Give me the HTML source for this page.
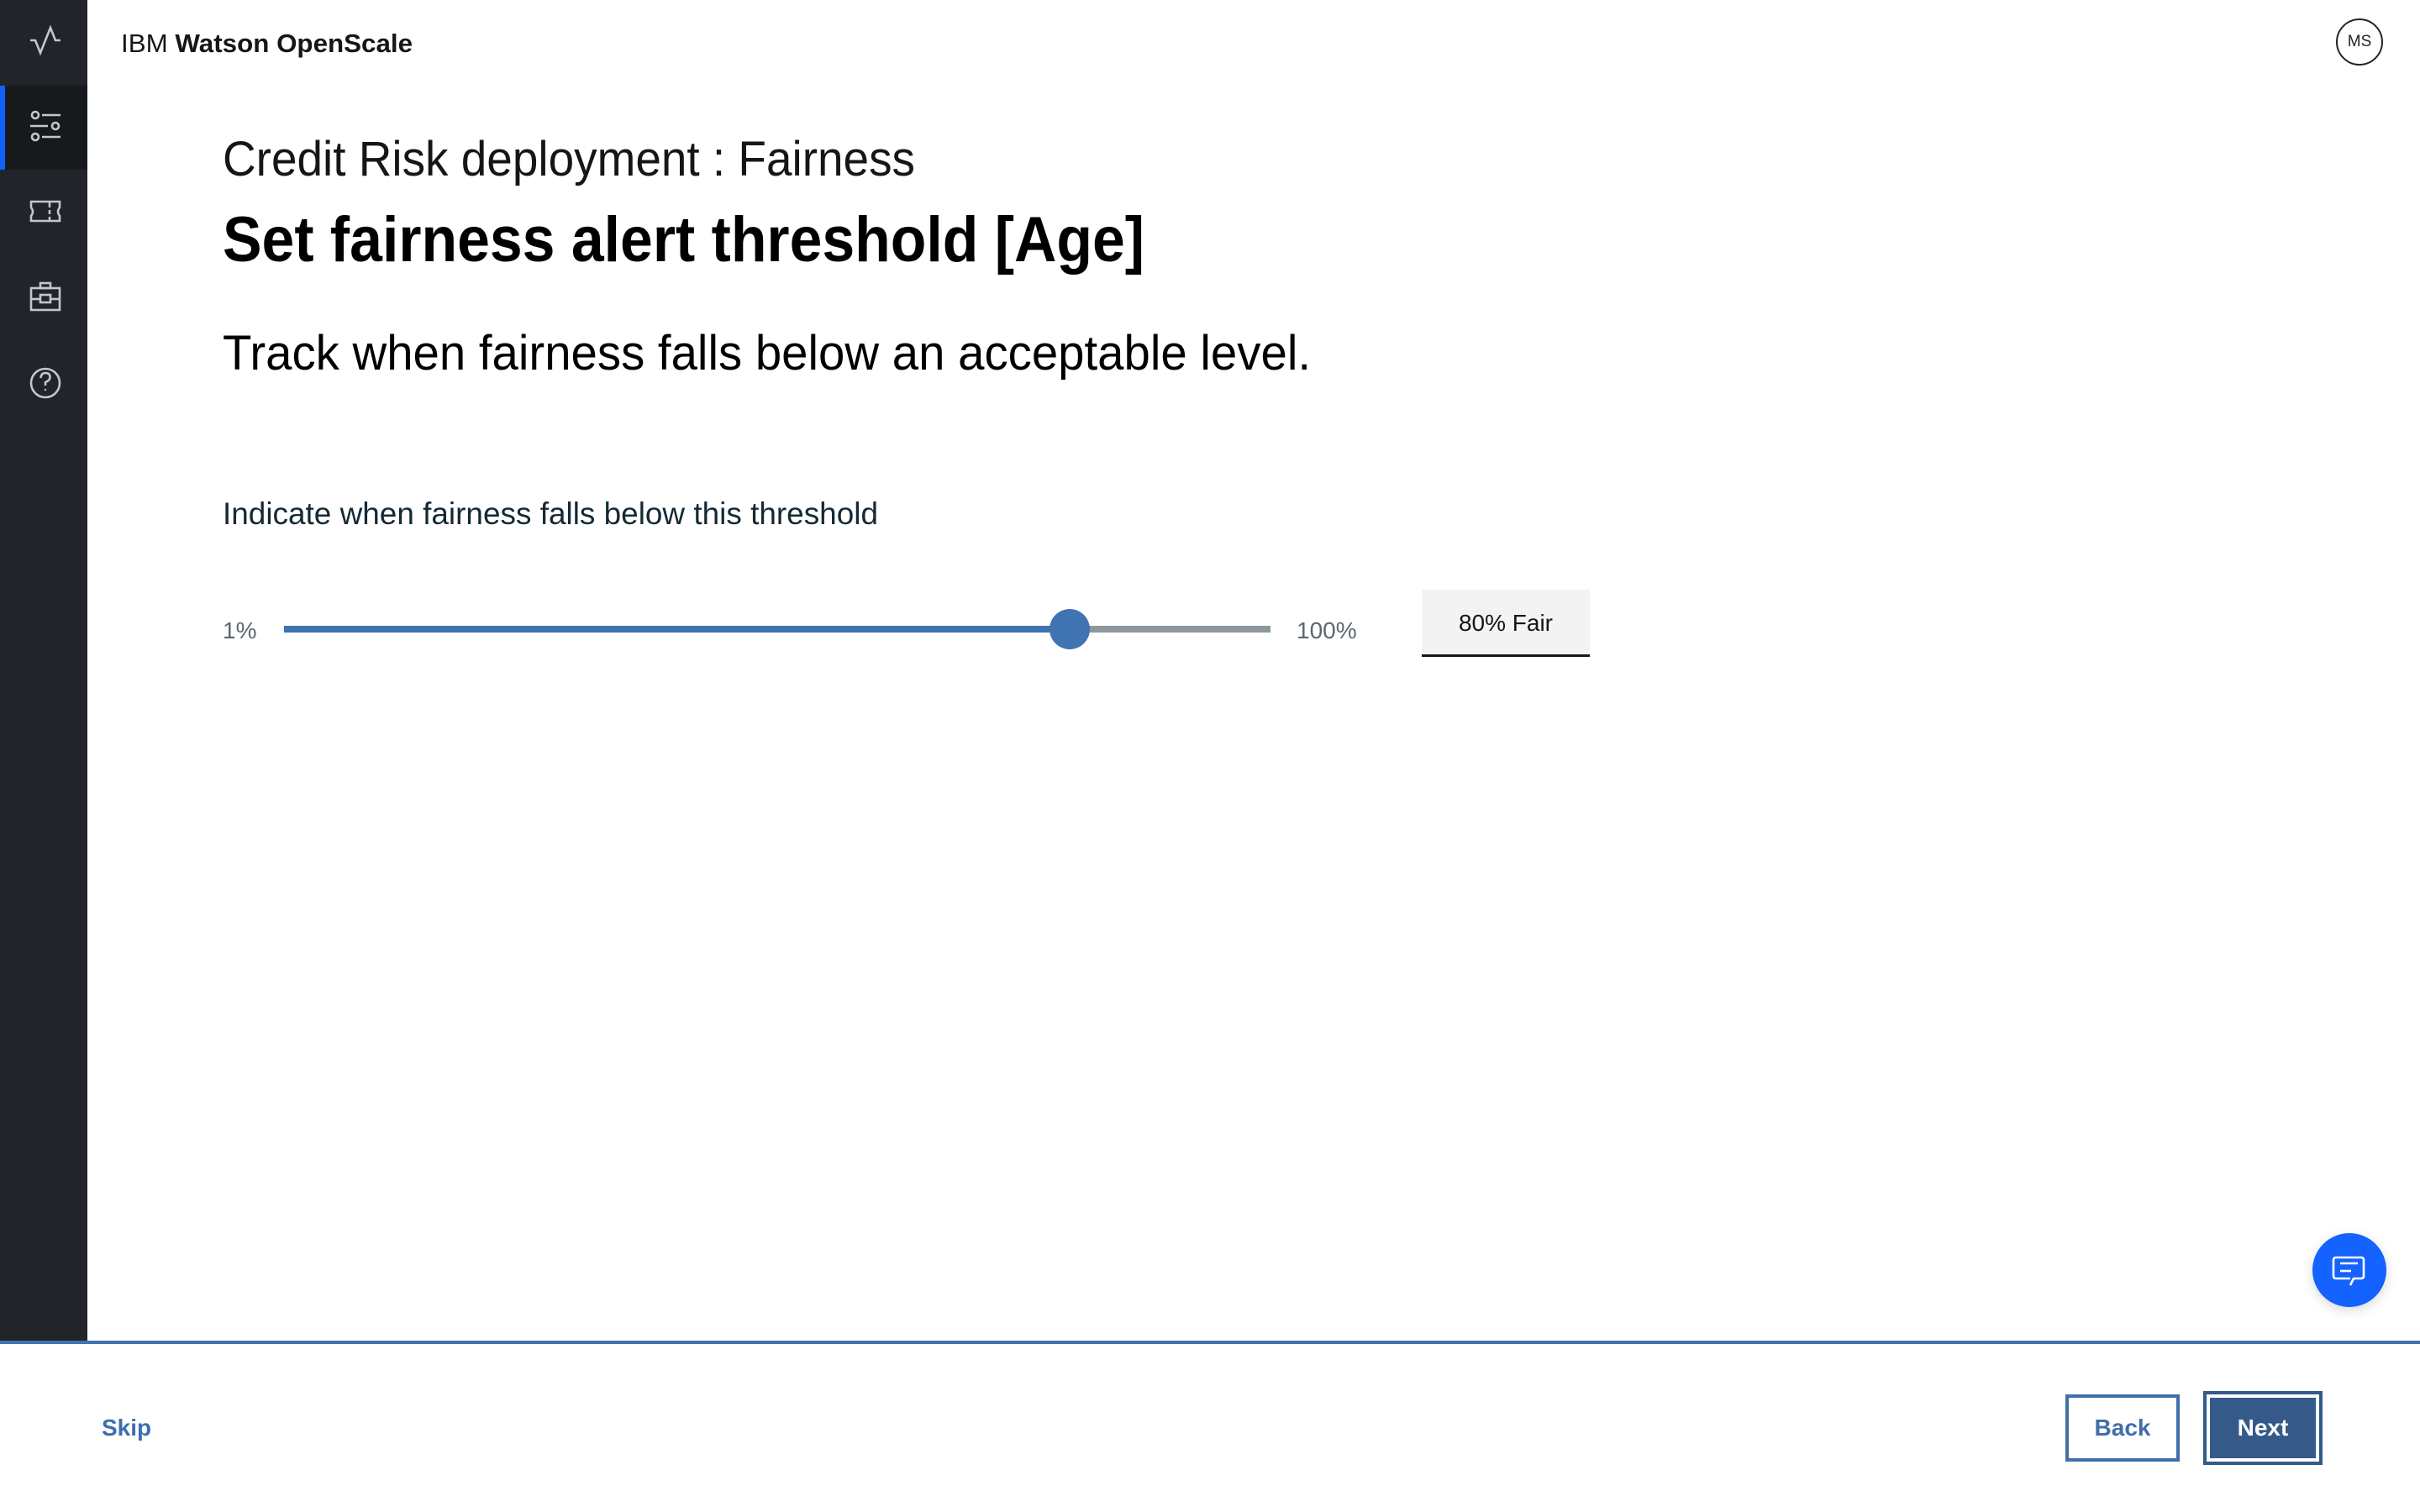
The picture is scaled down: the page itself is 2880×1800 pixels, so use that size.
<!DOCTYPE html>
<html><head><meta charset="utf-8"><style>
html,body{margin:0;padding:0;width:2880px;height:1800px;overflow:hidden;background:#fff;font-family:"Liberation Sans",sans-serif;}
.sb{position:absolute;left:0;top:0;width:104px;height:1596px;background:#212529;}
.act{position:absolute;left:0;top:102px;width:104px;height:100px;background:#161a1d;}
.actbar{position:absolute;left:0;top:102px;width:6px;height:100px;background:#0f62fe;}
.line{position:absolute;left:0;top:1596px;width:2880px;height:4px;background:#3f73b1;}
.track{position:absolute;left:338px;top:745px;width:1174px;height:8px;background:#8c979e;}
.fill{position:absolute;left:338px;top:745px;width:935px;height:8px;background:#3f73b1;}
.thumb{position:absolute;left:1249px;top:725px;width:48px;height:48px;border-radius:50%;background:#3f73b1;}
.box{position:absolute;left:1692px;top:702px;width:200px;height:77px;background:#f3f3f3;border-bottom:3px solid #161616;font-size:28px;color:#161616;text-align:center;line-height:80px;}
.avatar{position:absolute;left:2780px;top:22px;width:52px;height:52px;border:2.5px solid #212529;border-radius:50%;font-size:19px;color:#212529;text-align:center;line-height:52px;}
.skip{position:absolute;left:121px;top:1684px;font-size:28px;font-weight:bold;color:#3c6eb0;}
.back{position:absolute;left:2458px;top:1660px;width:128px;height:72px;border:4px solid #3f6fa8;color:#3f6fa8;font-size:28px;font-weight:bold;text-align:center;line-height:72px;}
.next{position:absolute;left:2622px;top:1656px;width:134px;height:80px;border:4px solid #335a8b;background:#fff;}
.next div{position:absolute;left:4px;top:4px;width:126px;height:72px;background:#355a8a;color:#fff;font-size:28px;font-weight:bold;text-align:center;line-height:72px;}
.chat{position:absolute;left:2752px;top:1468px;width:88px;height:88px;border-radius:50%;background:#1563fe;box-shadow:0 4px 14px rgba(0,0,0,0.15);}
</style></head><body>
<div class="sb"></div><div class="act"></div><div class="actbar"></div>
<svg style="position:absolute;left:0;top:0" width="104" height="520" fill="none" stroke="#c1c7cd" stroke-width="2.6">
<polyline points="36,48 42,48 48,63 60,33 66,48 72,48" stroke-linejoin="miter"/>
<circle cx="42" cy="137" r="4"/><line x1="50" y1="137" x2="72" y2="137"/>
<line x1="36" y1="150" x2="57" y2="150"/><circle cx="66" cy="150" r="4"/>
<circle cx="42" cy="163" r="4"/><line x1="50" y1="163" x2="72" y2="163"/>
<path d="M37,240 H71 V247 Q67,252 71,257 V263 H37 V257 Q41,252 37,247 Z"/>
<line x1="59" y1="240" x2="59" y2="247" /><line x1="59" y1="250" x2="59" y2="255"/><line x1="59" y1="258" x2="59" y2="263"/>
<rect x="37" y="343" width="34" height="26"/><rect x="48" y="337" width="12" height="6"/>
<line x1="37" y1="356" x2="48" y2="356"/><line x1="60" y1="356" x2="71" y2="356"/><rect x="48" y="351" width="12" height="9"/>
<circle cx="54" cy="456" r="17"/>
<path d="M48.5,450 Q49,444 54,444 Q59.5,444 59.5,449 Q59.5,453 54,455 V459"/>
<circle cx="54" cy="464" r="1.2" fill="#c1c7cd" stroke="none"/>
</svg>
<svg style="position:absolute;left:0;top:0" width="2880" height="900" font-family="'Liberation Sans',sans-serif">
<text x="144" y="62" font-size="31" fill="#161616" textLength="347" lengthAdjust="spacingAndGlyphs">IBM <tspan font-weight="bold">Watson OpenScale</tspan></text>
<text x="265" y="209" font-size="58" font-weight="300" fill="#161616" textLength="824" lengthAdjust="spacingAndGlyphs">Credit Risk deployment : Fairness</text>
<text x="265" y="311" font-size="76" font-weight="bold" fill="#000" textLength="1097" lengthAdjust="spacingAndGlyphs">Set fairness alert threshold [Age]</text>
<text x="265" y="440" font-size="58" fill="#000" textLength="1295" lengthAdjust="spacingAndGlyphs">Track when fairness falls below an acceptable level.</text>
<text x="265" y="624" font-size="37" fill="#152935" textLength="780" lengthAdjust="spacingAndGlyphs">Indicate when fairness falls below this threshold</text>
<text x="265" y="760" font-size="28" fill="#5a6872">1%</text>
<text x="1543" y="760" font-size="28" fill="#5a6872">100%</text>
</svg>
<div class="track"></div><div class="fill"></div><div class="thumb"></div>
<div class="box">80% Fair</div>
<div class="avatar">MS</div>
<div class="chat"></div>
<svg style="position:absolute;left:2752px;top:1468px" width="88" height="88" fill="none" stroke="#fff" stroke-width="2.6" stroke-linejoin="round">
<path d="M45,54 H28 Q25,54 25,51 V32 Q25,29 28,29 H58 Q61,29 61,32 V51 Q61,54 58,54 H49 L45,62"/>
<line x1="33" y1="36" x2="54" y2="36"/><line x1="33" y1="45" x2="46" y2="45"/>
</svg>
<div class="line"></div>
<div class="skip">Skip</div>
<div class="back">Back</div>
<div class="next"><div>Next</div></div>
</body></html>
